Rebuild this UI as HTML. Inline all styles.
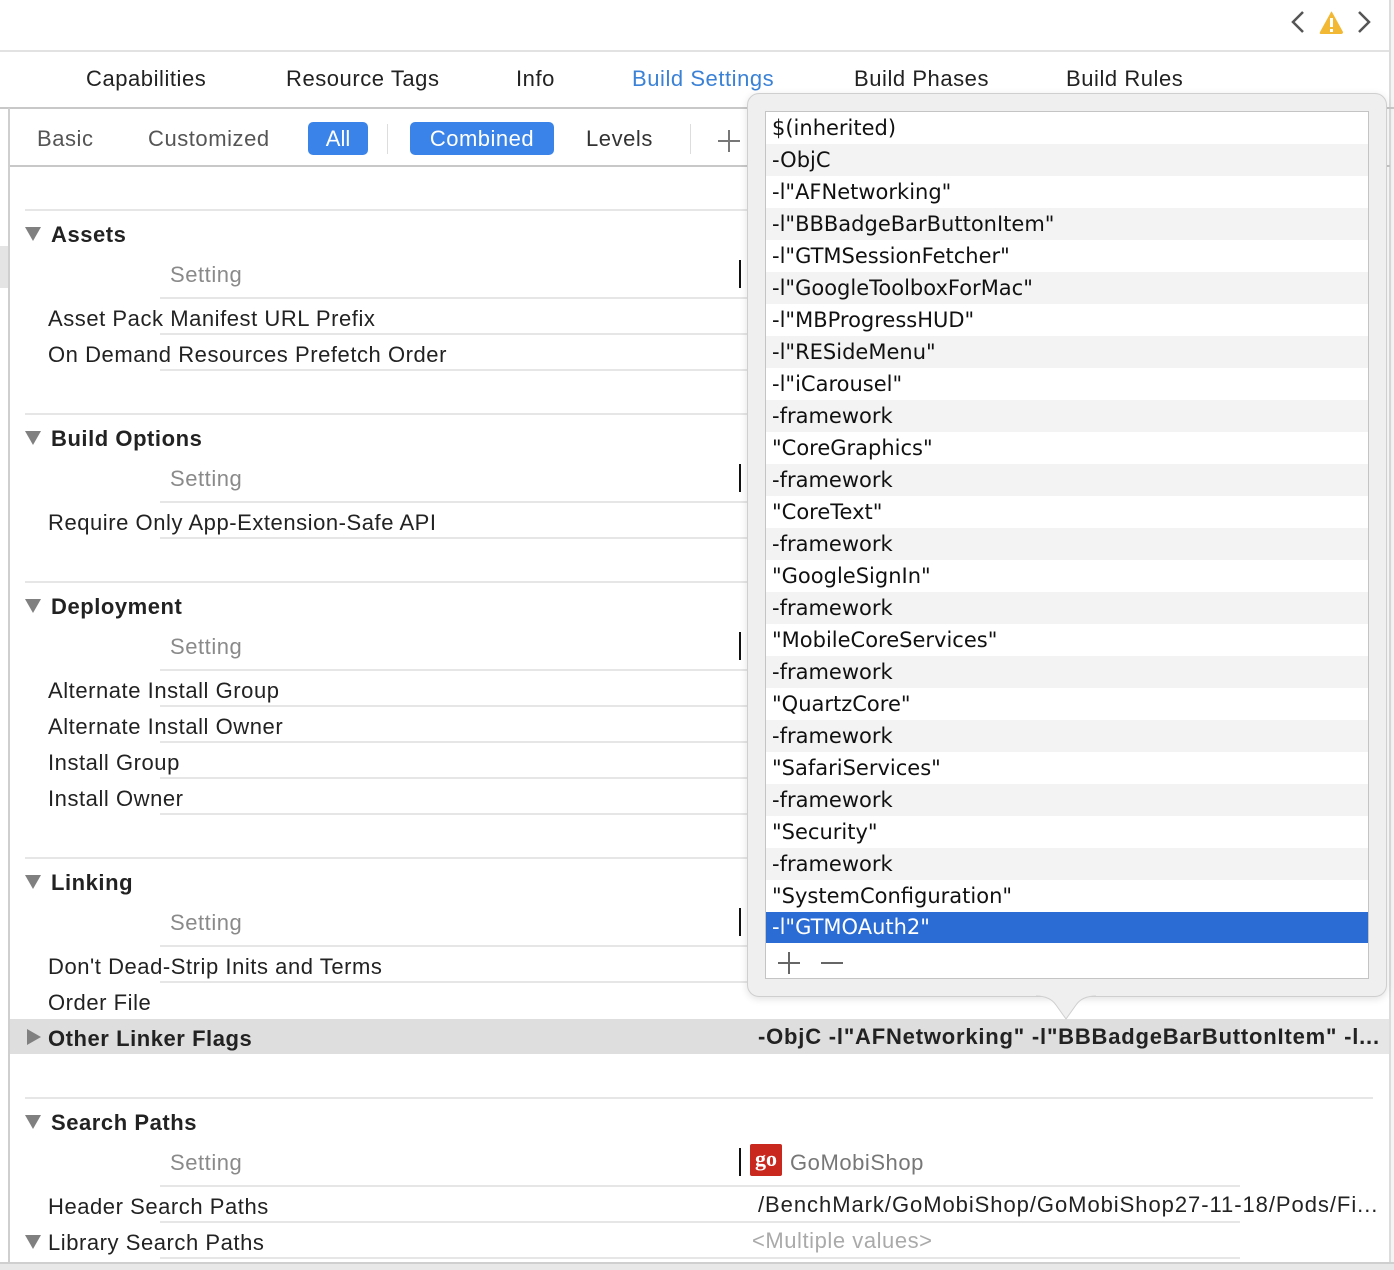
<!DOCTYPE html>
<html><head><meta charset="utf-8"><style>
*{margin:0;padding:0;box-sizing:border-box}
body{width:1394px;height:1270px;background:#fff;position:relative;overflow:hidden;font-family:"Liberation Sans",sans-serif;color:#222}
.a{position:absolute;white-space:nowrap}
.t{position:absolute;white-space:nowrap;font-size:22px;line-height:24px;height:24px;letter-spacing:0.55px;margin-top:1px}
.b{font-weight:bold}
.g{color:#8a8a8a}
.h{position:absolute;height:2px;background:#e6e6e6}
.tri{position:absolute;width:0;height:0;border-left:8px solid transparent;border-right:8px solid transparent;border-top:14px solid #808080}
.cur{position:absolute;width:2px;height:28px;background:#111}
.pr{position:absolute;left:0;width:602px;height:32px;font-family:"DejaVu Sans",sans-serif;font-size:21px;line-height:32px;padding-left:6px;color:#111}
</style></head><body>
<div class="h" style="left:0;top:50px;width:1394px;background:#e2e2e2"></div>
<svg class="a" style="left:1288px;top:8px" width="90" height="30">
<path d="M15 4 L5 14 L15 24" stroke="#555" stroke-width="2.5" fill="none"/>
<path d="M43 4 Q43 3 44 4 L55 24 Q55 26 53 26 L33 26 Q31 26 32 24 Z" fill="#f2b733"/>
<rect x="42" y="10" width="3" height="9" fill="#fff"/><rect x="42" y="21" width="3" height="3" fill="#fff"/>
<path d="M71 4 L81 14 L71 24" stroke="#555" stroke-width="2.5" fill="none"/>
</svg>
<div class="a" style="left:1389px;top:0;width:2px;height:1270px;background:#dcdcdc"></div>
<div class="a" style="left:1391px;top:0;width:3px;height:1270px;background:#f4f4f4"></div>
<div class="t" style="left:-8px;top:66px">l</div>
<div class="t" style="left:86px;top:66px">Capabilities</div>
<div class="t" style="left:286px;top:66px">Resource Tags</div>
<div class="t" style="left:516px;top:66px">Info</div>
<div class="t" style="left:632px;top:66px;color:#3b82d6">Build Settings</div>
<div class="t" style="left:854px;top:66px">Build Phases</div>
<div class="t" style="left:1066px;top:66px">Build Rules</div>
<div class="h" style="left:0;top:107px;width:1394px;background:#c8c8c8"></div>
<div class="a" style="left:8px;top:108px;width:2px;height:1156px;background:#cfcfcf"></div>
<div class="t" style="left:37px;top:126px;color:#555">Basic</div>
<div class="t" style="left:148px;top:126px;color:#555">Customized</div>
<div class="a" style="left:308px;top:122px;width:60px;height:33px;background:#3a83e8;border-radius:5px;color:#fff;font-size:22px;line-height:33px;text-align:center">All</div>
<div class="a" style="left:387px;top:124px;width:1px;height:30px;background:#ddd"></div>
<div class="a" style="left:410px;top:122px;width:144px;height:33px;background:#3a83e8;border-radius:5px;color:#fff;font-size:22px;letter-spacing:0.5px;line-height:33px;text-align:center">Combined</div>
<div class="t" style="left:586px;top:126px;color:#333">Levels</div>
<div class="a" style="left:690px;top:124px;width:1px;height:30px;background:#ddd"></div>
<div class="a" style="left:718px;top:140px;width:22px;height:1.5px;background:#777"></div>
<div class="a" style="left:728px;top:130px;width:1.5px;height:22px;background:#777"></div>
<div class="h" style="left:10px;top:165px;width:1380px;background:#c8c8c8"></div>
<div class="a" style="left:0;top:246px;width:8px;height:42px;background:#e4e4e4"></div>

<div class="h" style="left:25px;top:209px;width:740px"></div>
<div class="tri" style="left:25px;top:227px"></div><div class="t b" style="left:51px;top:222px">Assets</div>
<div class="t g" style="left:170px;top:262px">Setting</div><div class="cur" style="left:739px;top:260px"></div>
<div class="h" style="left:160px;top:297px;width:600px"></div>
<div class="t" style="left:48px;top:306px">Asset Pack Manifest URL Prefix</div>
<div class="h" style="left:160px;top:333px;width:600px"></div>
<div class="t" style="left:48px;top:342px">On Demand Resources Prefetch Order</div>
<div class="h" style="left:160px;top:369px;width:600px"></div>

<div class="h" style="left:25px;top:413px;width:740px"></div>
<div class="tri" style="left:25px;top:431px"></div><div class="t b" style="left:51px;top:426px">Build Options</div>
<div class="t g" style="left:170px;top:466px">Setting</div><div class="cur" style="left:739px;top:464px"></div>
<div class="h" style="left:160px;top:501px;width:600px"></div>
<div class="t" style="left:48px;top:510px">Require Only App-Extension-Safe API</div>
<div class="h" style="left:160px;top:537px;width:600px"></div>

<div class="h" style="left:25px;top:581px;width:740px"></div>
<div class="tri" style="left:25px;top:599px"></div><div class="t b" style="left:51px;top:594px">Deployment</div>
<div class="t g" style="left:170px;top:634px">Setting</div><div class="cur" style="left:739px;top:632px"></div>
<div class="h" style="left:160px;top:669px;width:600px"></div>
<div class="t" style="left:48px;top:678px">Alternate Install Group</div>
<div class="h" style="left:160px;top:705px;width:600px"></div>
<div class="t" style="left:48px;top:714px">Alternate Install Owner</div>
<div class="h" style="left:160px;top:741px;width:600px"></div>
<div class="t" style="left:48px;top:750px">Install Group</div>
<div class="h" style="left:160px;top:777px;width:600px"></div>
<div class="t" style="left:48px;top:786px">Install Owner</div>
<div class="h" style="left:160px;top:813px;width:600px"></div>

<div class="h" style="left:25px;top:857px;width:740px"></div>
<div class="tri" style="left:25px;top:875px"></div><div class="t b" style="left:51px;top:870px">Linking</div>
<div class="t g" style="left:170px;top:910px">Setting</div><div class="cur" style="left:739px;top:908px"></div>
<div class="h" style="left:160px;top:945px;width:600px"></div>
<div class="t" style="left:48px;top:954px">Don't Dead-Strip Inits and Terms</div>
<div class="h" style="left:160px;top:981px;width:600px"></div>
<div class="t" style="left:48px;top:990px">Order File</div>
<div class="a" style="left:10px;top:1019px;width:1230px;height:35px;background:#dedede"></div>
<div class="a" style="left:1240px;top:1019px;width:149px;height:35px;background:#e6e6e6"></div>
<div class="a" style="left:27px;top:1029px;width:0;height:0;border-top:8px solid transparent;border-bottom:8px solid transparent;border-left:14px solid #808080"></div>
<div class="t b" style="left:48px;top:1026px">Other Linker Flags</div>
<div class="t b" style="left:758px;top:1024px;letter-spacing:0.8px">-ObjC -l"AFNetworking" -l"BBBadgeBarButtonItem" -l...</div>

<div class="h" style="left:25px;top:1097px;width:1348px"></div>
<div class="tri" style="left:25px;top:1115px"></div><div class="t b" style="left:51px;top:1110px">Search Paths</div>
<div class="t g" style="left:170px;top:1150px">Setting</div><div class="cur" style="left:739px;top:1148px"></div>
<div class="a" style="left:750px;top:1144px;width:32px;height:32px;background:#c8281e;border-radius:2px;color:#fff;font-family:'Liberation Serif',serif;font-size:22px;line-height:30px;text-align:center;font-weight:bold">go</div>
<div class="t" style="left:790px;top:1150px;color:#777">GoMobiShop</div>
<div class="h" style="left:160px;top:1185px;width:1080px"></div>
<div class="t" style="left:48px;top:1194px">Header Search Paths</div>
<div class="t" style="left:758px;top:1192px;letter-spacing:0.95px">/BenchMark/GoMobiShop/GoMobiShop27-11-18/Pods/Fi...</div>
<div class="h" style="left:160px;top:1221px;width:1080px"></div>
<div class="tri" style="left:25px;top:1235px"></div><div class="t" style="left:48px;top:1230px">Library Search Paths</div>
<div class="t" style="left:752px;top:1228px;color:#aaa">&lt;Multiple values&gt;</div>
<div class="h" style="left:160px;top:1257px;width:1080px"></div>
<div class="a" style="left:0;top:1262px;width:1394px;height:8px;background:#e8e8e8;border-top:2px solid #cfcfcf"></div>

<div class="a" style="left:747px;top:93px;width:640px;height:904px;background:#efefef;border:1px solid #cfcfcf;border-radius:12px;box-shadow:0 2px 8px rgba(0,0,0,0.12)"></div>
<svg class="a" style="left:1036px;top:995px" width="60" height="28"><path d="M0 1 Q14 1 20 10 L30 24 L40 10 Q46 1 60 1 Z" fill="#efefef"/><path d="M0 1 Q14 1 20 10 L30 24 L40 10 Q46 1 60 1" stroke="#cfcfcf" fill="none"/></svg>
<div class="a" style="left:765px;top:111px;width:604px;height:868px;background:#fff;border:1px solid #c4c4c4">
<div class="pr" style="top:0">$(inherited)</div>
<div class="pr" style="top:32px;background:#f3f3f3">-ObjC</div>
<div class="pr" style="top:64px">-l"AFNetworking"</div>
<div class="pr" style="top:96px;background:#f3f3f3">-l"BBBadgeBarButtonItem"</div>
<div class="pr" style="top:128px">-l"GTMSessionFetcher"</div>
<div class="pr" style="top:160px;background:#f3f3f3">-l"GoogleToolboxForMac"</div>
<div class="pr" style="top:192px">-l"MBProgressHUD"</div>
<div class="pr" style="top:224px;background:#f3f3f3">-l"RESideMenu"</div>
<div class="pr" style="top:256px">-l"iCarousel"</div>
<div class="pr" style="top:288px;background:#f3f3f3">-framework</div>
<div class="pr" style="top:320px">"CoreGraphics"</div>
<div class="pr" style="top:352px;background:#f3f3f3">-framework</div>
<div class="pr" style="top:384px">"CoreText"</div>
<div class="pr" style="top:416px;background:#f3f3f3">-framework</div>
<div class="pr" style="top:448px">"GoogleSignIn"</div>
<div class="pr" style="top:480px;background:#f3f3f3">-framework</div>
<div class="pr" style="top:512px">"MobileCoreServices"</div>
<div class="pr" style="top:544px;background:#f3f3f3">-framework</div>
<div class="pr" style="top:576px">"QuartzCore"</div>
<div class="pr" style="top:608px;background:#f3f3f3">-framework</div>
<div class="pr" style="top:640px">"SafariServices"</div>
<div class="pr" style="top:672px;background:#f3f3f3">-framework</div>
<div class="pr" style="top:704px">"Security"</div>
<div class="pr" style="top:736px;background:#f3f3f3">-framework</div>
<div class="pr" style="top:768px">"SystemConfiguration"</div>
<div class="pr" style="top:800px;height:31px;background:#2a6cd4;color:#fff;line-height:31px">-l"GTMOAuth2"</div>
<div class="a" style="left:12px;top:850px;width:22px;height:1.5px;background:#666"></div>
<div class="a" style="left:22px;top:840px;width:1.5px;height:22px;background:#666"></div>
<div class="a" style="left:55px;top:850px;width:22px;height:1.5px;background:#666"></div>
</div>
</body></html>
